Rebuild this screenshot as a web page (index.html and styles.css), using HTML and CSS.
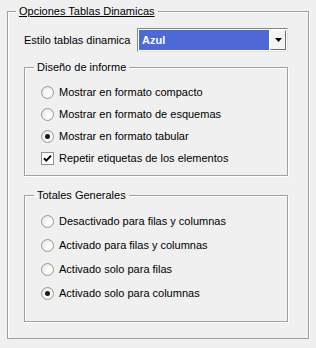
FILE: index.html
```html
<!DOCTYPE html>
<html lang="es">
<head>
    <meta charset="UTF-8">
    <title>Opciones Tablas Dinamicas</title>
    <link rel="stylesheet" href="styles.css">
</head>
<body>

    <fieldset class="panel">
        <legend class="panel-title">Opciones Tablas Dinamicas</legend>

        <div class="style-row">
            <span class="style-label">Estilo tablas dinamica</span>
            <div class="combo">
                <span class="combo-value">Azul</span>
                <span class="combo-btn">
                    <svg width="7" height="4" viewBox="0 0 7 4"><path d="M0 0h7L3.5 4z" fill="#000"/></svg>
                </span>
            </div>
        </div>

        <fieldset class="group group-layout">
            <legend>Diseño de informe</legend>
            <label class="option"><span class="radio"></span>Mostrar en formato compacto</label>
            <label class="option"><span class="radio"></span>Mostrar en formato de esquemas</label>
            <label class="option"><span class="radio checked"></span>Mostrar en formato tabular</label>
            <label class="option">
                <span class="check">
                    <svg width="9" height="9" viewBox="0 0 9 9"><path d="M1 4.2l2.3 2.4L8 1.6" fill="none" stroke="#000" stroke-width="2"/></svg>
                </span>Repetir etiquetas de los elementos
            </label>
        </fieldset>

        <fieldset class="group group-totals">
            <legend>Totales Generales</legend>
            <label class="option"><span class="radio"></span>Desactivado para filas y columnas</label>
            <label class="option"><span class="radio"></span>Activado para filas y columnas</label>
            <label class="option"><span class="radio"></span>Activado solo para filas</label>
            <label class="option"><span class="radio checked"></span>Activado solo para columnas</label>
        </fieldset>
    </fieldset>

</body>
</html>
```

FILE: styles.css
```css
body {
    margin: 0;
    padding: 4px 0 0 7px;
    background-color: #f0f0f0;
    font-family: 'Liberation Sans', Arial, sans-serif;
    font-size: 11px;
    color: #000;
}

/* Etched group frames */
fieldset {
    margin: 0;
    min-width: 0;
    border: 1px solid #a0a0a0;
    box-shadow: inset 1px 1px 0 #fff, 1px 1px 0 #fff;
}

legend {
    padding: 0 3px;
    line-height: 14px;
}

.panel {
    width: 302px;
    height: 335px;
    box-sizing: border-box;
    padding: 10px 20px 0 8px;
}

.panel-title {
    text-decoration: underline;
}

/* Style selector */
.style-row {
    display: flex;
    align-items: center;
    height: 24px;
}

.style-label {
    margin-left: 8px;
    width: 113px;
    flex: none;
    white-space: nowrap;
}

.combo {
    display: flex;
    width: 151px;
    height: 24px;
    box-sizing: border-box;
    border: 1px solid #828790;
    border-right-color: #e3e3e3;
    border-bottom-color: #e3e3e3;
    padding: 1px;
    background: #fff;
}

.combo-value {
    flex: 1;
    background-color: #4d69d6;
    color: #fff;
    font-weight: bold;
    padding-left: 3px;
    line-height: 20px;
}

.combo-btn {
    width: 14px;
    display: flex;
    align-items: center;
    justify-content: center;
    background: #f4f4f4;
    border: 1px solid #fff;
    border-right-color: #6d6d6d;
    border-bottom-color: #6d6d6d;
    margin-left: 1px;
}

/* Inner groups */
.group {
    width: 264px;
    box-sizing: border-box;
    margin-left: 8px;
    padding-left: 9px;
}

.group-layout {
    margin-top: 8px;
    padding-top: 7px;
    padding-bottom: 6px;
}

.group-totals {
    margin-top: 12px;
    padding-top: 7px;
    padding-bottom: 16px;
}

.option {
    display: flex;
    align-items: center;
    height: 22px;
    margin-left: 7px;
}

.group-totals .option {
    height: 24px;
}

.radio,
.check {
    width: 13px;
    height: 13px;
    box-sizing: border-box;
    margin-right: 5px;
    flex: none;
}

.radio {
    border-radius: 50%;
    border: 1px solid #979797;
    background: radial-gradient(circle at 65% 65%, #fff 0, #f6f6f6 45%, #dcdcdc 100%);
    display: flex;
    align-items: center;
    justify-content: center;
}

.radio.checked::after {
    content: "";
    width: 5px;
    height: 5px;
    border-radius: 50%;
    background: #1a1a1a;
}

.check {
    border: 1px solid #8e8f8f;
    background: #fff;
    display: flex;
    align-items: center;
    justify-content: center;
}
```
